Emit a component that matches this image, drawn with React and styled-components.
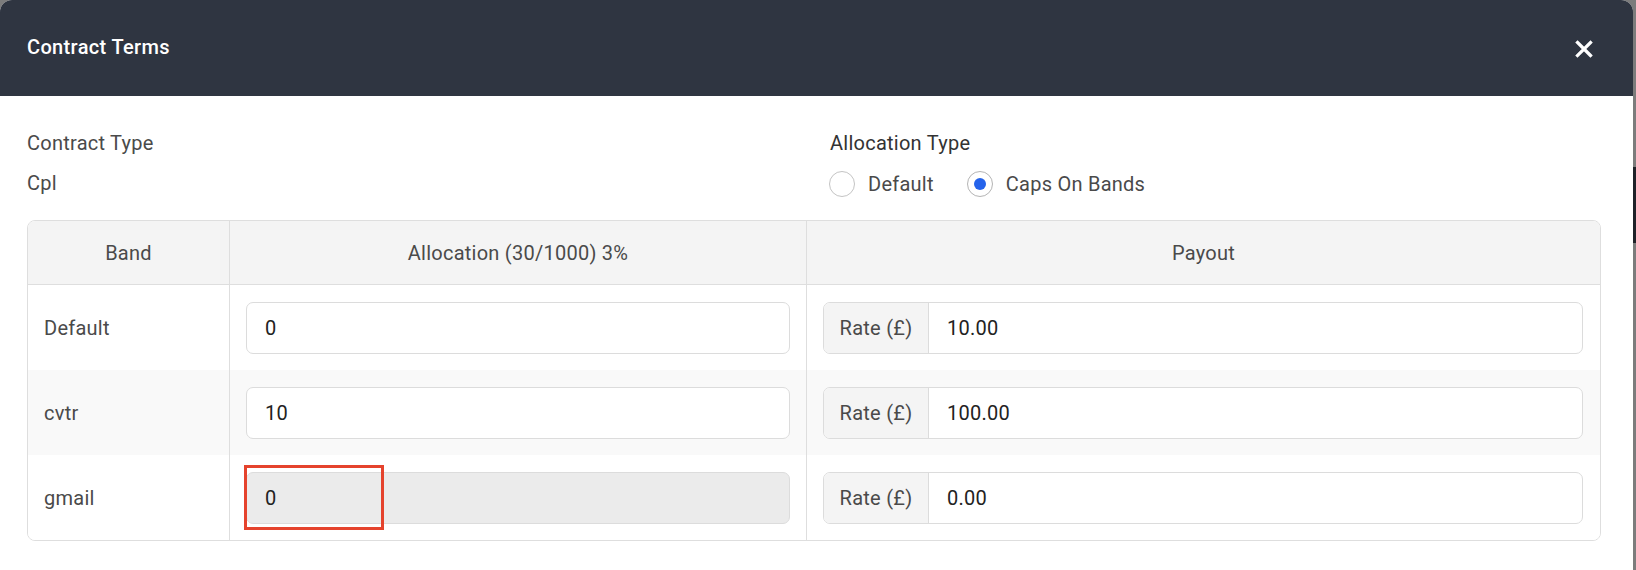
import React from "react";
import styled, { createGlobalStyle } from "styled-components";

const Global = createGlobalStyle`
  html, body { margin: 0; padding: 0; }
  body {
    background: #7c7c7c;
    font-family: Roboto, "Liberation Sans", Arial, sans-serif;
    overflow: hidden;
  }
  #root { position: relative; }
`;

const Backdrop = styled.div`
  position: relative;
  height: 570px;
`;

const BackStrip = styled.div`
  position: absolute;
  left: 1633px;
  top: 167px;
  width: 3px;
  height: 76px;
  background: #1f2229;
`;

const Modal = styled.div`
  width: 1633px;
  height: 570px;
  background: #fff;
  border-radius: 12px 12px 0 0;
  overflow: hidden;
  display: flex;
  flex-direction: column;
`;

const Header = styled.div`
  height: 96px;
  flex: none;
  background: #2f3541;
  display: flex;
  align-items: center;
  justify-content: space-between;
  padding: 0 40px 0 27px;
  box-sizing: border-box;
`;

const Title = styled.h2`
  margin: 0;
  color: #fff;
  font-size: 20px;
  font-weight: 500;
  letter-spacing: 0.35px;
  margin-top: -2px;
`;

const CloseButton = styled.button`
  border: 0;
  background: transparent;
  padding: 0;
  width: 18px;
  height: 18px;
  display: flex;
  align-items: center;
  justify-content: center;
  cursor: pointer;
  margin-top: 1px;
`;

const Body = styled.div`
  padding: 35px 32px 0 27px;
  letter-spacing: 0.25px;
`;

const InfoGrid = styled.div`
  display: grid;
  grid-template-columns: 1fr 1fr;
  align-items: start;
  column-gap: 32px;
  margin-bottom: 23px;
`;

const Field = styled.div`
  display: flex;
  flex-direction: column;
  gap: ${(p) => p.$gap || 15}px;
`;

const Label = styled.div`
  font-size: 20px;
  line-height: 24px;
  color: ${(p) => (p.$strong ? "#333" : "#4a4a4a")};
`;

const Value = styled.div`
  font-size: 20px;
  line-height: 24px;
  color: #4a4a4a;
`;

const RadioGroup = styled.div`
  display: flex;
  align-items: center;
  gap: 33px;
  margin-left: -1px;
`;

const RadioOption = styled.label`
  display: flex;
  align-items: center;
  gap: 13px;
  font-size: 20px;
  line-height: 26px;
  color: #4a4a4a;
  cursor: pointer;
`;

const RadioCircle = styled.span`
  width: 24px;
  height: 24px;
  border-radius: 50%;
  border: 1px solid ${(p) => (p.$checked ? "#b4b4b4" : "#c4c4c4")};
  background: #fff;
  display: flex;
  align-items: center;
  justify-content: center;
  &::after {
    content: "";
    width: 12px;
    height: 12px;
    border-radius: 50%;
    background: ${(p) => (p.$checked ? "#2563eb" : "transparent")};
  }
`;

const Table = styled.div`
  border: 1px solid #dedede;
  border-radius: 8px;
  overflow: hidden;
  display: grid;
  grid-template-columns: 202px 577px 1fr;
`;

const HeadCell = styled.div`
  height: 63px;
  background: #f4f4f4;
  border-bottom: 1px solid #dedede;
  border-right: ${(p) => (p.$last ? "0" : "1px solid #dedede")};
  display: flex;
  align-items: center;
  justify-content: center;
  font-size: 20px;
  color: #4a4a4a;
`;

const Cell = styled.div`
  height: 85px;
  box-sizing: border-box;
  background: ${(p) => (p.$striped ? "#f9f9f9" : "#fff")};
  border-right: ${(p) => (p.$last ? "0" : "1px solid #dedede")};
  display: flex;
  align-items: center;
  padding: 0 ${(p) => (p.$last ? "17px" : "16px")} 0 16px;
  font-size: 20px;
  color: #4a4a4a;
`;

const InputWrap = styled.div`
  position: relative;
  flex: 1;
`;

const TextInput = styled.input`
  width: 100%;
  box-sizing: border-box;
  height: 52px;
  border: 1px solid #dcdcdc;
  border-radius: 7px;
  background: ${(p) => (p.disabled ? "#ebebeb" : "#fff")};
  padding: 0 18px;
  font-family: inherit;
  font-size: 20px;
  letter-spacing: 0.25px;
  color: #222;
  outline: none;
  -webkit-text-fill-color: #222;
  opacity: 1;
`;

const Highlight = styled.div`
  position: absolute;
  left: -2px;
  top: -7px;
  width: 140px;
  height: 65px;
  box-sizing: border-box;
  border: 3px solid #e5432d;
  pointer-events: none;
`;

const InputGroup = styled.div`
  flex: 1;
  display: flex;
  height: 52px;
  border: 1px solid #dcdcdc;
  border-radius: 7px;
  overflow: hidden;
  box-sizing: border-box;
  background: #fff;
`;

const Addon = styled.span`
  flex: none;
  width: 104px;
  background: #f4f4f4;
  border-right: 1px solid #dcdcdc;
  display: flex;
  align-items: center;
  justify-content: center;
  font-size: 20px;
  color: #4a4a4a;
`;

const GroupInput = styled.input`
  flex: 1;
  min-width: 0;
  border: 0;
  outline: none;
  background: transparent;
  padding: 0 18px;
  font-family: inherit;
  font-size: 20px;
  letter-spacing: 0.25px;
  color: #222;
`;

const rows = [
  { band: "Default", alloc: "0", rate: "10.00" },
  { band: "cvtr", alloc: "10", rate: "100.00", striped: true },
  { band: "gmail", alloc: "0", rate: "0.00", disabled: true },
];

function CloseIcon() {
  return (
    <svg width="18" height="18" viewBox="0 0 18 18">
      <path d="M2.5 2.5 L15.5 15.5 M15.5 2.5 L2.5 15.5" stroke="#fff" strokeWidth="3.2" strokeLinecap="square" />
    </svg>
  );
}

export default function App() {
  return (
    <>
      <Global />
      <Backdrop>
        <BackStrip />
        <Modal>
          <Header>
            <Title>Contract Terms</Title>
            <CloseButton aria-label="Close">
              <CloseIcon />
            </CloseButton>
          </Header>
          <Body>
            <InfoGrid>
              <Field $gap={16}>
                <Label>Contract Type</Label>
                <Value>Cpl</Value>
              </Field>
              <Field $gap={16}>
                <Label $strong>Allocation Type</Label>
                <RadioGroup>
                  <RadioOption>
                    <RadioCircle />
                    Default
                  </RadioOption>
                  <RadioOption>
                    <RadioCircle $checked />
                    Caps On Bands
                  </RadioOption>
                </RadioGroup>
              </Field>
            </InfoGrid>
            <Table>
              <HeadCell>Band</HeadCell>
              <HeadCell>Allocation (30/1000) 3%</HeadCell>
              <HeadCell $last>Payout</HeadCell>
              {rows.map((r) => (
                <React.Fragment key={r.band}>
                  <Cell $striped={r.striped}>{r.band}</Cell>
                  <Cell $striped={r.striped}>
                    <InputWrap>
                      <TextInput defaultValue={r.alloc} disabled={r.disabled} />
                      {r.disabled && <Highlight />}
                    </InputWrap>
                  </Cell>
                  <Cell $striped={r.striped} $last>
                    <InputGroup>
                      <Addon>Rate (£)</Addon>
                      <GroupInput defaultValue={r.rate} />
                    </InputGroup>
                  </Cell>
                </React.Fragment>
              ))}
            </Table>
          </Body>
        </Modal>
      </Backdrop>
    </>
  );
}
